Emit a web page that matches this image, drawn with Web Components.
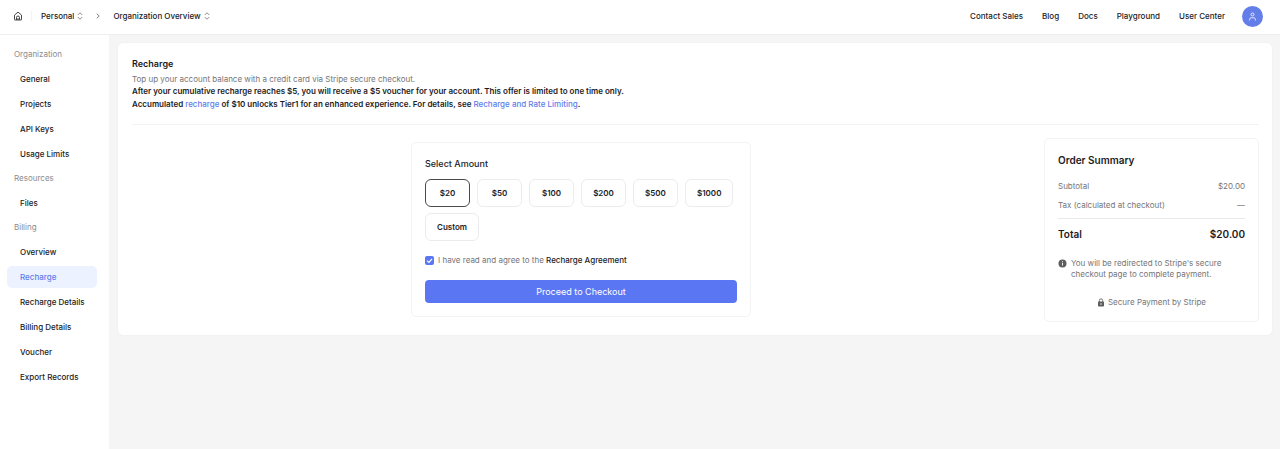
<!DOCTYPE html>
<html lang="en">
<head>
<meta charset="utf-8">
<meta name="viewport" content="width=device-width, initial-scale=1">
<title>Recharge</title>
<style>
  :root {
    --ink: #1c1c1f;
    --muted: #757578;
    --faint: #8b8b8e;
    --line: #f3f3f5;
    --brand: #5b76f3;
    --link: #5f7cec;
    --soft: #ecf2ff;
    --canvas: #f5f5f5;
  }
  body { margin: 0; background: var(--canvas); color: var(--ink); font: 8px/12px Inter, "Liberation Sans", sans-serif; }
</style>
</head>
<body>
<app-shell>
  <top-bar slot="header">
    <org-switcher label="Workspace" value="Personal"></org-switcher>
    <crumb-arrow></crumb-arrow>
    <org-switcher label="Page" value="Organization Overview"></org-switcher>
    <nav-link slot="nav">Contact Sales</nav-link>
    <nav-link slot="nav">Blog</nav-link>
    <nav-link slot="nav">Docs</nav-link>
    <nav-link slot="nav">Playground</nav-link>
    <nav-link slot="nav">User Center</nav-link>
  </top-bar>

  <side-nav slot="sidebar">
    <side-group label="Organization">
      <side-item>General</side-item>
      <side-item>Projects</side-item>
      <side-item>API Keys</side-item>
      <side-item>Usage Limits</side-item>
    </side-group>
    <side-group label="Resources">
      <side-item>Files</side-item>
    </side-group>
    <side-group label="Billing">
      <side-item>Overview</side-item>
      <side-item current>Recharge</side-item>
      <side-item>Recharge Details</side-item>
      <side-item>Billing Details</side-item>
      <side-item>Voucher</side-item>
      <side-item>Export Records</side-item>
    </side-group>
  </side-nav>

  <recharge-page>
    <amount-form></amount-form>
    <order-summary slot="summary"></order-summary>
  </recharge-page>
</app-shell>

<script>
  const define = (name, html, setup) => {
    const template = document.createElement('template');
    template.innerHTML = html;
    customElements.define(name, class extends HTMLElement {
      constructor() {
        super();
        this.attachShadow({ mode: 'open' }).append(template.content.cloneNode(true));
      }
      connectedCallback() {
        if (setup) setup(this, this.shadowRoot);
      }
    });
  };

  define('app-shell', `
    <style>
      :host { display: grid; grid-template: auto 1fr / 109px minmax(0, 1fr); min-height: 100vh; }
      header { grid-column: 1 / -1; }
      aside { background: #fff; }
      main { padding: 8px 8px 8px 9px; }
    </style>
    <header><slot name="header"></slot></header>
    <aside><slot name="sidebar"></slot></aside>
    <main><slot></slot></main>`);

  define('top-bar', `
    <style>
      :host { display: flex; align-items: center; justify-content: space-between; height: 35px; padding: 0 17px 2px 13px; box-sizing: border-box; background: #fff; border-bottom: 1px solid #eeeeef; }
      .trail, nav { display: flex; align-items: center; }
      .home { display: flex; padding-right: 8px; margin-right: 9px; border-right: 1px solid var(--line); color: #333; }
      nav { gap: 19px; }
      .avatar { display: grid; place-items: center; width: 21px; height: 21px; padding: 0; margin-left: -2px; border: 0; border-radius: 50%; background: #647ee9; color: #fff; }
    </style>
    <div class="trail">
      <a class="home" href="#" aria-label="Home">
        <svg width="10" height="10" viewBox="0 0 20 20" fill="none" stroke="currentColor" stroke-width="1.8" stroke-linejoin="round"><path d="M3 8.2 10 2.2l7 6V17a1 1 0 0 1-1 1H4a1 1 0 0 1-1-1z"/><path d="M7 18v-5a3 3 0 0 1 6 0v5M10 14v4"/></svg>
      </a>
      <slot></slot>
    </div>
    <nav aria-label="Main">
      <slot name="nav"></slot>
      <button class="avatar" aria-label="Account">
        <svg width="9" height="9" viewBox="0 0 18 18" fill="none" stroke="currentColor" stroke-width="1.6"><circle cx="9" cy="5" r="3"/><path d="M3 17v-1.5a4 4 0 0 1 4-4h4a4 4 0 0 1 4 4V17"/></svg>
      </button>
    </nav>`);

  define('org-switcher', `
    <style>
      :host { display: flex; align-items: center; gap: 3px; font-weight: 500; }
      select { appearance: none; field-sizing: content; margin: 0; padding: 0; border: 0; background: none; color: inherit; font: inherit; }
      svg { color: #666; }
    </style>
    <select><option></option></select>
    <svg width="6" height="8" viewBox="0 0 12 16" fill="none" stroke="currentColor" stroke-width="1.5"><path d="M1.5 6 6 1.5 10.5 6M1.5 10 6 14.5 10.5 10"/></svg>`,
    (host, root) => {
      root.querySelector('select').setAttribute('aria-label', host.getAttribute('label'));
      root.querySelector('option').textContent = host.getAttribute('value');
    });

  define('crumb-arrow', `
    <style>:host { display: flex; padding: 0 12px; color: #777; }</style>
    <svg width="6" height="6" viewBox="0 0 12 12" fill="none" stroke="currentColor" stroke-width="1.8"><path d="M3.5 1.5 8.5 6l-5 4.5"/></svg>`);

  define('nav-link', `
    <style>
      :host { display: block; font-weight: 500; }
      a { color: inherit; text-decoration: none; }
    </style>
    <a href="#"><slot></slot></a>`);

  define('side-nav', `
    <style>
      :host { display: block; padding: 9px 12px 9px 7px; }
      nav { display: grid; gap: 3px; }
    </style>
    <nav aria-label="Organization"><slot></slot></nav>`);

  define('side-group', `
    <style>
      :host { display: grid; gap: 3px; }
      h2 { margin: 0; padding-left: 7px; font-size: 8px; line-height: 21px; font-weight: 400; color: var(--faint); }
    </style>
    <h2></h2>
    <slot></slot>`,
    (host, root) => { root.querySelector('h2').textContent = host.getAttribute('label'); });

  define('side-item', `
    <style>
      :host { display: block; font-weight: 500; }
      a { display: block; padding-left: 13px; border-radius: 5px; line-height: 22px; color: inherit; text-decoration: none; }
      :host([current]) a { background: var(--soft); color: var(--link); }
    </style>
    <a href="#"><slot></slot></a>`,
    (host, root) => {
      if (host.hasAttribute('current')) root.querySelector('a').setAttribute('aria-current', 'page');
    });

  define('recharge-page', `
    <style>
      :host { display: block; padding: 15px 13px 13px 14px; border-radius: 5px; background: #fff; box-shadow: 0 0 2px #0000000d; }
      h1 { margin: 0 0 3px; font-size: 9px; line-height: 12px; font-weight: 600; }
      p { margin: 0; line-height: 13px; font-weight: 600; }
      .lead { line-height: 12px; font-weight: 400; color: var(--muted); }
      a { color: var(--link); text-decoration: none; font-weight: 500; }
      .intro { padding-bottom: 13px; margin-bottom: 13px; border-bottom: 1px solid var(--line); }
      .body { display: grid; grid-template-columns: minmax(0, 1fr) 215px; gap: 14px; align-items: start; }
      .form { display: grid; justify-content: center; grid-template-columns: minmax(0, 340px); padding-top: 4px; }
    </style>
    <div class="intro">
      <h1>Recharge</h1>
      <p class="lead">Top up your account balance with a credit card via Stripe secure checkout.</p>
      <p>After your cumulative recharge reaches $5, you will receive a $5 voucher for your account. This offer is limited to one time only.</p>
      <p>Accumulated <a href="#">recharge</a> of $10 unlocks Tier1 for an enhanced experience. For details, see <a href="#">Recharge and Rate Limiting</a>.</p>
    </div>
    <div class="body">
      <div class="form"><slot></slot></div>
      <slot name="summary"></slot>
    </div>`);

  define('amount-form', `
    <style>
      :host { display: block; padding: 14px 13px 13px; border: 1px solid var(--line); border-radius: 5px; }
      h2 { margin: 0 0 9px; font-size: 9px; line-height: 13px; font-weight: 500; }
      .amounts { display: flex; flex-wrap: wrap; gap: 6px 7px; }
      button { font: inherit; color: inherit; }
      .amounts button { min-width: 45px; height: 28px; padding: 0 11px; border: 1px solid #ececee; border-radius: 6px; background: #fff; font-weight: 600; }
      .amounts button[aria-pressed="true"] { border-color: #4a4a4d; }
      .agree { display: flex; align-items: center; gap: 4px; margin: 13px 0 14px; color: var(--muted); }
      .agree a { color: var(--ink); font-weight: 500; text-decoration: none; }
      input { appearance: none; width: 9px; height: 9px; margin: 0; border: 1px solid #c9c9cf; border-radius: 2px; }
      input:checked { border: 0; background: var(--brand) url("data:image/svg+xml,%3Csvg xmlns='http://www.w3.org/2000/svg' viewBox='0 0 18 18' fill='none' stroke='white' stroke-width='2.4'%3E%3Cpath d='M4 9.2 7.8 13 14.2 5.8'/%3E%3C/svg%3E") center / 9px 9px; }
      .pay { display: block; width: 100%; height: 23px; padding: 0; border: 0; border-radius: 4px; background: var(--brand); color: #fff; font-size: 9px; }
    </style>
    <h2 id="title">Select Amount</h2>
    <div class="amounts" role="group" aria-labelledby="title">
      <button type="button" aria-pressed="true">$20</button>
      <button type="button" aria-pressed="false">$50</button>
      <button type="button" aria-pressed="false">$100</button>
      <button type="button" aria-pressed="false">$200</button>
      <button type="button" aria-pressed="false">$500</button>
      <button type="button" aria-pressed="false">$1000</button>
      <button type="button" aria-pressed="false">Custom</button>
    </div>
    <div class="agree">
      <input type="checkbox" id="agree" checked>
      <label for="agree">I have read and agree to the <a href="#">Recharge Agreement</a></label>
    </div>
    <button class="pay" type="button">Proceed to Checkout</button>`,
    (host, root) => {
      const buttons = root.querySelectorAll('.amounts button');
      buttons.forEach(button => button.addEventListener('click', () => {
        buttons.forEach(other => other.setAttribute('aria-pressed', other === button));
      }));
    });

  define('order-summary', `
    <style>
      :host { display: block; padding: 14px 13px 13px; border: 1px solid var(--line); border-radius: 5px; color: var(--muted); }
      h2 { margin: 0 0 13px; font-size: 10px; line-height: 14px; font-weight: 600; color: var(--ink); }
      dl { margin: 0; display: grid; gap: 7px; }
      dl div { display: flex; justify-content: space-between; }
      dd { margin: 0; }
      .total { padding-top: 8px; border-top: 1px solid #e9e9eb; font-size: 10px; line-height: 14px; font-weight: 600; color: var(--ink); }
      p { margin: 0; display: flex; gap: 4px; line-height: 11px; }
      .note { margin: 17px 0; }
      .note svg { flex: none; margin-top: 1px; }
      .secure { justify-content: center; align-items: center; gap: 3px; }
    </style>
    <h2>Order Summary</h2>
    <dl>
      <div><dt>Subtotal</dt><dd>$20.00</dd></div>
      <div><dt>Tax (calculated at checkout)</dt><dd>—</dd></div>
      <div class="total"><dt>Total</dt><dd>$20.00</dd></div>
    </dl>
    <p class="note">
      <svg width="9" height="9" viewBox="0 0 18 18" aria-hidden="true"><circle cx="9" cy="9" r="8" fill="#5e5e61"/><path d="M9 8v5M9 4.6v2" stroke="#fff" stroke-width="1.8"/></svg>
      <span>You will be redirected to Stripe's secure checkout page to complete payment.</span>
    </p>
    <p class="secure">
      <svg width="8" height="9" viewBox="0 0 16 18" aria-hidden="true"><path d="M4.7 8V5a3.3 3.3 0 0 1 6.6 0v3" fill="none" stroke="#5e5e61" stroke-width="1.7"/><rect x="2" y="7" width="12" height="10" rx="1.5" fill="#5e5e61"/><circle cx="8" cy="12" r="1.4" fill="#fff"/></svg>
      <span>Secure Payment by Stripe</span>
    </p>`);
</script>
</body>
</html>
